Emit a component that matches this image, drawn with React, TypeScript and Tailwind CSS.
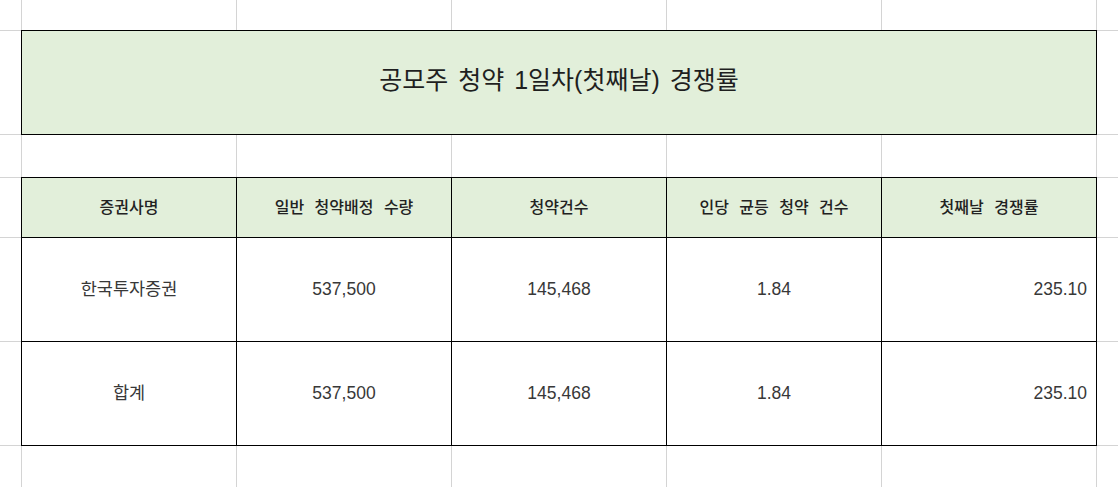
import React from "react"

const GRID = "border-[#d4d4d4]"

type Row =
  | { kind: "blank" }
  | { kind: "title"; text: string }
  | { kind: "header"; cells: string[] }
  | { kind: "data"; cells: string[] }

const rows: Row[] = [
  { kind: "blank" },
  { kind: "title", text: "공모주 청약 1일차(첫째날) 경쟁률" },
  { kind: "blank" },
  { kind: "header", cells: ["증권사명", "일반 청약배정 수량", "청약건수", "인당 균등 청약 건수", "첫째날 경쟁률"] },
  { kind: "data", cells: ["한국투자증권", "537,500", "145,468", "1.84", "235.10"] },
  { kind: "data", cells: ["합계", "537,500", "145,468", "1.84", "235.10"] },
  { kind: "blank" },
]

export default function App() {
  return (
    <div
      className="grid h-[487px] w-[1118px] grid-cols-[22px_repeat(5,215px)_1fr] grid-rows-[31px_104px_43px_60px_104px_104px_1fr] overflow-hidden bg-white"
      style={{ fontFamily: '"Liberation Sans", "Noto Sans CJK KR", sans-serif' }}
    >
      {rows.map((row, r) => {
        const last = r === rows.length - 1
        const edge = last ? `border-r ${GRID}` : `border-r border-b ${GRID}`
        const tail = last ? "" : `border-b ${GRID}`
        return (
          <React.Fragment key={r}>
            <div className={edge} />
            {row.kind === "blank" &&
              [0, 1, 2, 3, 4].map((c) => <div key={c} className={edge} />)}
            {row.kind === "title" && (
              <div className="col-span-5 -mt-px -ml-px flex items-center justify-center border border-black bg-[#e2efda] pb-[3px] text-[25px] text-[#1f1f1f] [word-spacing:3px]">
                {row.text}
              </div>
            )}
            {row.kind === "header" &&
              row.cells.map((t, c) => (
                <div
                  key={c}
                  className="-mt-px -ml-px flex items-center justify-center border border-black bg-[#e2efda] text-[16px] font-medium text-[#222] [word-spacing:6px]"
                >
                  {t}
                </div>
              ))}
            {row.kind === "data" &&
              row.cells.map((t, c) => (
                <div
                  key={c}
                  className={`-mt-px -ml-px flex items-center border border-black bg-white text-[17.5px] text-[#383838] ${
                    c === 4 ? "justify-end pr-[9px]" : "justify-center"
                  }`}
                >
                  {t}
                </div>
              ))}
            <div className={tail} />
          </React.Fragment>
        )
      })}
    </div>
  )
}
